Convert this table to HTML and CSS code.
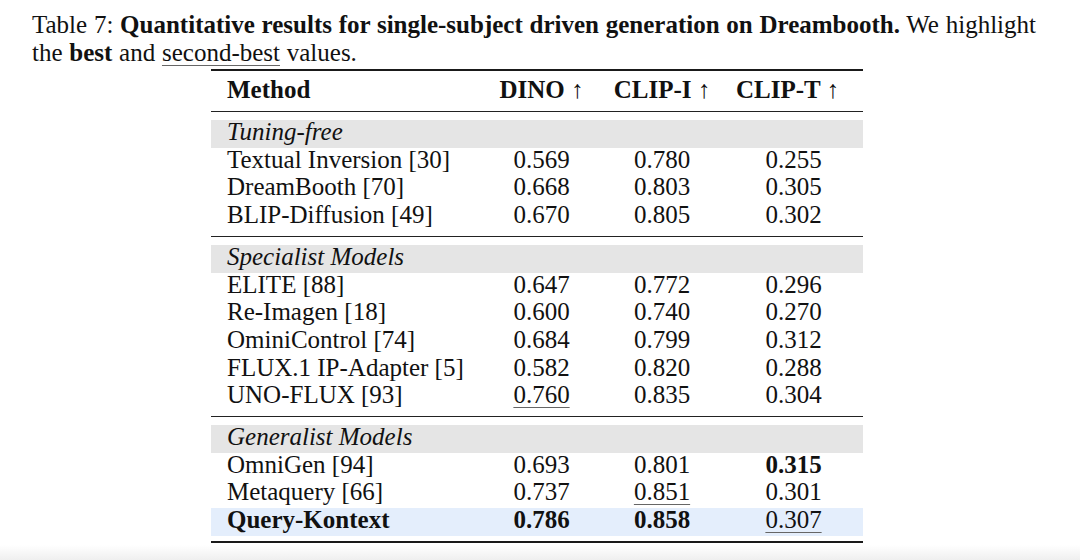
FILE: index.html
```html
<!DOCTYPE html>
<html>
<head>
<meta charset="utf-8">
<link rel="stylesheet" href="styles.css">
</head>
<body>
<main class="page">
  <p class="caption">Table 7: <b>Quantitative results for single-subject driven generation on Dreambooth.</b> We highlight the <b>best</b> and <span class="second">second-best</span> values.</p>
  <div class="results">
    <div class="row head">
      <div class="method">Method</div>
      <div class="val">DINO <span class="arrow">↑</span></div>
      <div class="val">CLIP-I <span class="arrow">↑</span></div>
      <div class="val last">CLIP-T <span class="arrow">↑</span></div>
    </div>
    <section class="group">
      <div class="row band"><div class="method"><i>Tuning-free</i></div></div>
      <div class="row"><div class="method">Textual Inversion [30]</div><div class="val">0.569</div><div class="val">0.780</div><div class="val">0.255</div></div>
      <div class="row"><div class="method">DreamBooth [70]</div><div class="val">0.668</div><div class="val">0.803</div><div class="val">0.305</div></div>
      <div class="row"><div class="method">BLIP-Diffusion [49]</div><div class="val">0.670</div><div class="val">0.805</div><div class="val">0.302</div></div>
    </section>
    <section class="group">
      <div class="row band"><div class="method"><i>Specialist Models</i></div></div>
      <div class="row"><div class="method">ELITE [88]</div><div class="val">0.647</div><div class="val">0.772</div><div class="val">0.296</div></div>
      <div class="row"><div class="method">Re-Imagen [18]</div><div class="val">0.600</div><div class="val">0.740</div><div class="val">0.270</div></div>
      <div class="row"><div class="method">OminiControl [74]</div><div class="val">0.684</div><div class="val">0.799</div><div class="val">0.312</div></div>
      <div class="row"><div class="method">FLUX.1 IP-Adapter [5]</div><div class="val">0.582</div><div class="val">0.820</div><div class="val">0.288</div></div>
      <div class="row"><div class="method">UNO-FLUX [93]</div><div class="val"><span class="second">0.760</span></div><div class="val">0.835</div><div class="val">0.304</div></div>
    </section>
    <section class="group">
      <div class="row band"><div class="method"><i>Generalist Models</i></div></div>
      <div class="row"><div class="method">OmniGen [94]</div><div class="val">0.693</div><div class="val">0.801</div><div class="val"><b>0.315</b></div></div>
      <div class="row"><div class="method">Metaquery [66]</div><div class="val">0.737</div><div class="val"><span class="second">0.851</span></div><div class="val">0.301</div></div>
      <div class="row ours"><div class="method"><b>Query-Kontext</b></div><div class="val"><b>0.786</b></div><div class="val"><b>0.858</b></div><div class="val"><span class="second">0.307</span></div></div>
    </section>
  </div>
</main>
<div class="shade"></div>
</body>
</html>
```
FILE: styles.css
```css
html, body {
  margin: 0;
  padding: 0;
  background: #ffffff;
}
body {
  display: flex;
  flex-direction: column;
  height: 560px;
  overflow: hidden;
  font-family: "Liberation Serif", "Times New Roman", serif;
  font-size: 25px;
  color: #111111;
}
.page {
  flex: 1;
}
.shade {
  height: 15px;
  background: linear-gradient(#ffffff, #efefef);
}
.caption {
  margin: 0;
  padding: 11px 0 0 32px;
  width: 1028px;
  line-height: 27.7px;
  word-spacing: 0.5px;
}
.second {
  text-decoration: underline;
  text-decoration-color: #666;
  text-decoration-thickness: 1px;
  text-underline-offset: 4px;
}
.results {
  margin: 3px 0 0 211px;
  width: 652px;
  border-top: 2px solid #1a1a1a;
  border-bottom: 2px solid #1a1a1a;
}
.row {
  display: grid;
  grid-template-columns: 272px 117px 124px 139px;
  height: 27.7px;
  line-height: 23px;
}
.method {
  padding-left: 16px;
  white-space: nowrap;
}
.val {
  text-align: center;
  white-space: nowrap;
}
.head {
  font-weight: bold;
  padding: 7px 0 5px;
  border-bottom: 1px solid #222;
}
.head .last {
  padding-right: 12px;
}
.arrow {
  font-weight: normal;
}
.group {
  padding: 8px 0 5px;
}
.group + .group {
  border-top: 1px solid #222;
}
.band {
  background: #e5e5e5;
}
.ours {
  background: #e4eefc;
}
```
